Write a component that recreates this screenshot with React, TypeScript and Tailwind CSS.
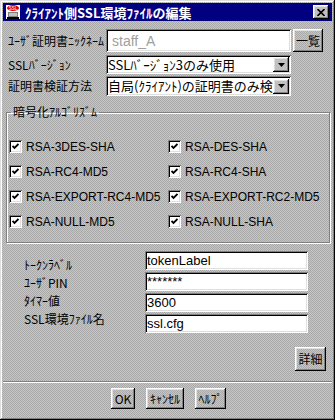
import React from 'react';

const raised =
  'shadow-[inset_-1px_-1px_#000,inset_1px_1px_#fff,inset_-2px_-2px_#808080,inset_2px_2px_#dfdfdf]';
const sunken =
  'bg-white shadow-[inset_1px_1px_#808080,inset_-1px_-1px_#fff,inset_2px_2px_#000,inset_-2px_-2px_#dfdfdf]';
const jp = "font-['MS_UI_Gothic','Noto_Sans_CJK_JP',sans-serif]";
const lat = "font-['Liberation_Sans','Noto_Sans_CJK_JP',sans-serif]";

const ciphers = [
  ['RSA-3DES-SHA', 'RSA-DES-SHA'],
  ['RSA-RC4-MD5', 'RSA-RC4-SHA'],
  ['RSA-EXPORT-RC4-MD5', 'RSA-EXPORT-RC2-MD5'],
  ['RSA-NULL-MD5', 'RSA-NULL-SHA'],
];

function Checkbox({ label }: { label: string }) {
  return (
    <div className="flex w-[159px] items-center gap-[4px]">
      <span className={`flex h-[13px] w-[13px] shrink-0 items-center justify-center ${sunken}`}>
        <svg width="7" height="7" viewBox="0 0 7 7">
          <path d="M0.5 3 L2.5 5 L6.5 1" stroke="#000" strokeWidth="1.8" fill="none" />
        </svg>
      </span>
      <span className={`${lat} text-[12px] leading-none text-black`}>{label}</span>
    </div>
  );
}

function Combo({ text }: { text: string }) {
  return (
    <div className={`flex h-full w-[185px] items-center pl-[2px] pr-[2px] ${sunken}`}>
      <span className={`${jp} flex-1 overflow-hidden whitespace-nowrap text-[13px] leading-[16px] text-black`}>
        {text}
      </span>
      <span className={`flex h-[15px] w-[16px] shrink-0 items-center justify-center bg-[#c0c0c0] ${raised}`}>
        <svg width="7" height="4" viewBox="0 0 7 4">
          <path d="M0 0 H7 L3.5 4 Z" fill="#000" />
        </svg>
      </span>
    </div>
  );
}

function Btn({ label, w, h }: { label: string; w: string; h: string }) {
  return (
    <button
      className={`${jp} flex items-center justify-center text-[12px] leading-none text-black ${raised} ${w} ${h}`}
    >
      {label}
    </button>
  );
}

function Field({ value }: { value: string }) {
  return (
    <div className={`flex h-[19px] w-[163px] items-center pl-[2px] ${sunken}`}>
      <span className={`${lat} text-[13px] leading-none text-black`}>{value}</span>
    </div>
  );
}

export default function App() {
  return (
    <div
      className={`flex h-[420px] w-[335px] flex-col p-[3px] bg-[repeating-conic-gradient(#c6c6c6_0_25%,#a9a9a9_0_50%)] [background-size:2px_2px] shadow-[inset_-1px_-1px_#000,inset_1px_1px_#dfdfdf,inset_-2px_-2px_#808080,inset_2px_2px_#fff]`}
    >
      {/* title bar */}
      <div className="flex h-[18px] items-center bg-[#000080] pl-[2px] pr-[3px]">
        <svg width="16" height="16" viewBox="0 0 16 16" className="shrink-0">
          <rect x="1" y="1" width="14" height="14" fill="#fff" />
          <ellipse cx="8" cy="4" rx="6" ry="3" fill="#e00000" />
          <text x="8" y="5.5" fontSize="4.5" fill="#fff" textAnchor="middle" fontFamily="Liberation Sans">SSL</text>
          <rect x="3" y="8" width="10" height="5" fill="#808080" />
          <rect x="4" y="9" width="8" height="3" fill="#c0c0c0" />
          <rect x="2" y="13" width="12" height="2" fill="#000" />
        </svg>
        <span className={`${jp} ml-[4px] flex-1 text-[13px] font-bold leading-none text-white`}>
          ｸﾗｲｱﾝﾄ側SSL環境ﾌｧｲﾙの編集
        </span>
        <span className={`flex h-[14px] w-[16px] items-center justify-center bg-[#c0c0c0] ${raised}`}>
          <svg width="8" height="7" viewBox="0 0 8 7">
            <path d="M0.5 0 L7.5 7 M7.5 0 L0.5 7" stroke="#000" strokeWidth="1.6" />
          </svg>
        </span>
      </div>

      {/* top rows */}
      <div className="mt-[8px] flex h-[23px] items-center">
        <span className={`${jp} w-[103px] pl-[5px] text-[12px] leading-none text-black whitespace-nowrap`}>
          ﾕｰｻﾞ証明書ﾆｯｸﾈｰﾑ
        </span>
        <div className={`flex h-full w-[185px] items-center pl-[6px] ${sunken}`}>
          <span className={`${lat} text-[14px] leading-none text-[#a0a0a0]`}>staff_A</span>
        </div>
        <div className="ml-[2px]">
          <Btn label="一覧" w="w-[30px]" h="h-[23px]" />
        </div>
      </div>
      <div className="mt-[3px] flex h-[19px] items-center">
        <span className={`${jp} w-[103px] pl-[5px] text-[12px] leading-none text-black`}>SSLﾊﾞｰｼﾞｮﾝ</span>
        <Combo text="SSLﾊﾞｰｼﾞｮﾝ3のみ使用" />
      </div>
      <div className="mt-[2px] flex h-[20px] items-center">
        <span className={`${jp} w-[103px] pl-[5px] text-[12px] leading-none text-black`}>証明書検証方法</span>
        <Combo text="自局(ｸﾗｲｱﾝﾄ)の証明書のみ検証" />
      </div>

      {/* cipher group */}
      <fieldset className="mx-[3px] mt-[8px] w-[320px] border border-[#808080] px-[2px] pb-[8px] pt-[14px] shadow-[inset_1px_1px_#fff,1px_1px_#fff]">
        <legend className={`${jp} ml-[2px] px-[2px] text-[12px] leading-[16px] text-black`}>
          暗号化ｱﾙｺﾞﾘｽﾞﾑ
        </legend>
        <div className="flex flex-col">
          {ciphers.map((row) => (
            <div key={row[0]} className="flex h-[25px] items-center">
              <Checkbox label={row[0]} />
              <Checkbox label={row[1]} />
            </div>
          ))}
        </div>
      </fieldset>

      {/* token fields */}
      <div className="mt-[8px] flex">
        <div className="flex w-[142px] flex-col pl-[21px] pt-[5px]">
          {['ﾄｰｸﾝﾗﾍﾞﾙ', 'ﾕｰｻﾞPIN', 'ﾀｲﾏｰ値', 'SSL環境ﾌｧｲﾙ名'].map((l) => (
            <span key={l} className={`${jp} flex h-[18px] items-center text-[12px] leading-none text-black`}>
              {l}
            </span>
          ))}
        </div>
        <div className="flex flex-col gap-[2px]">
          <Field value="tokenLabel" />
          <Field value="*******" />
          <Field value="3600" />
          <Field value="ssl.cfg" />
        </div>
      </div>

      <div className="mt-[14px] flex justify-end pr-[6px]">
        <Btn label="詳細" w="w-[31px]" h="h-[24px]" />
      </div>

      <div className="mt-[10px] h-[2px] border-t border-b border-t-[#808080] border-b-white" />

      <div className="mt-[5px] flex justify-center gap-[11px] pl-[2px]">
        <Btn label="OK" w="w-[24px]" h="h-[21px]" />
        <Btn label="ｷｬﾝｾﾙ" w="w-[38px]" h="h-[21px]" />
        <Btn label="ﾍﾙﾌﾟ" w="w-[31px]" h="h-[21px]" />
      </div>
    </div>
  );
}
